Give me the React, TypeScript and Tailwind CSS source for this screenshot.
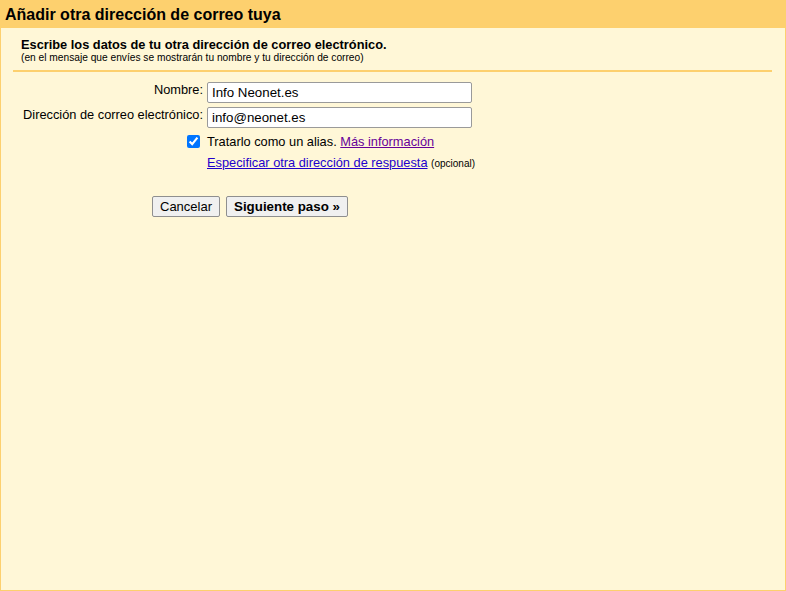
export default function App() {
  return (
    <div className="h-[591px] w-[786px] flex flex-col bg-[#fff7d7] border-l border-r border-b border-[#fdd06e] font-['Liberation_Sans',Arial,sans-serif] text-black">
      <div className="h-[28px] bg-[#fdd06e] px-[5px] flex items-center -mx-px">
        <h1 className="text-[16px] font-bold leading-none pt-[1px]">Añadir otra dirección de correo tuya</h1>
      </div>
      <div className="px-[12px] pt-[9px]">
        <div className="pl-[8px]">
          <div className="text-[12.8px] font-bold leading-[15px]">Escribe los datos de tu otra dirección de correo electrónico.</div>
          <div className="text-[10.2px] leading-[12px]">(en el mensaje que envíes se mostrarán tu nombre y tu dirección de correo)</div>
        </div>
        <div className="mt-[6px] h-[2px] bg-[#fdd06e] w-[759px]" />
      </div>
      <div className="mt-[10px] grid grid-cols-[202px_auto] gap-x-[4px] text-[12.8px]">
        <div className="text-right leading-[15px]">Nombre:</div>
        <div className="h-[25px]">
          <input
            defaultValue="Info Neonet.es"
            className="w-[265px] h-[21px] bg-white border border-[#9a9a9a] rounded-[2px] px-[4px] text-[13.3px] outline-none"
          />
        </div>
        <div className="text-right leading-[15px]">Dirección de correo electrónico:</div>
        <div className="h-[27px]">
          <input
            defaultValue="info@neonet.es"
            className="w-[265px] h-[21px] bg-white border border-[#9a9a9a] rounded-[2px] px-[4px] text-[13.3px] outline-none"
          />
        </div>
        <div className="flex justify-end items-start pr-[3px] pt-[1px]">
          <input type="checkbox" defaultChecked className="w-[13px] h-[13px] m-0 accent-[#0075ff]" />
        </div>
        <div className="h-[21px] leading-[15px]">
          Tratarlo como un alias.{" "}
          <a href="#" className="text-[#660099] underline">Más información</a>
        </div>
        <div />
        <div className="leading-[15px]">
          <a href="#" className="text-[#2200cc] underline">Especificar otra dirección de respuesta</a>{" "}
          <span className="text-[10px]">(opcional)</span>
        </div>
      </div>
      <div className="mt-[25px] pl-[151px] flex gap-[6px]">
        <button className="h-[21px] px-[7px] bg-[#f0f0f0] border border-[#8f8f8f] rounded-[2px] text-[13px]">Cancelar</button>
        <button className="h-[21px] px-[7px] bg-[#f0f0f0] border border-[#8f8f8f] rounded-[2px] font-bold text-[13.33px]">Siguiente paso »</button>
      </div>
    </div>
  );
}
